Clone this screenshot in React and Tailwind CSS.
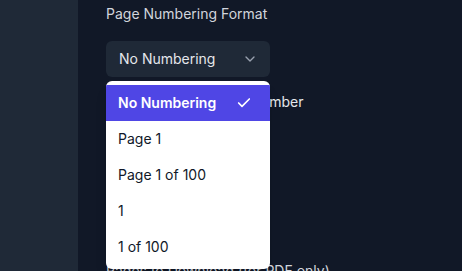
import { Check, ChevronDown } from 'lucide-react'

const options = ['No Numbering', 'Page 1', 'Page 1 of 100', '1', '1 of 100']

export default function App() {
  const selected = 'No Numbering'

  return (
    <div className="flex h-[271px] w-[462px] overflow-hidden bg-[#111827] font-['Inter','Liberation_Sans',sans-serif]">
      {/* Sidebar */}
      <aside className="w-[78px] shrink-0 bg-[#1f2937]" />

      {/* Settings panel */}
      <main className="flex-1 pl-[28px] pt-[4px]">
        <label className="block text-sm leading-5 text-gray-300">Page Numbering Format</label>

        <div className="relative mt-[17px] w-[164px]">
          <button className="flex h-9 w-full items-center justify-between rounded-md bg-[#1f2937] pl-[13px] pr-[12px] text-sm text-gray-200">
            <span>{selected}</span>
            <ChevronDown className="h-4 w-4 text-gray-400" strokeWidth={2} />
          </button>

          {/* Open listbox */}
          <ul className="absolute left-0 top-[40px] z-10 w-full overflow-hidden rounded-md bg-white py-1 shadow-lg">
            {options.map((opt) => (
              <li
                key={opt}
                className={`flex h-9 items-center justify-between pl-[12px] pr-[18px] text-sm ${
                  opt === selected ? 'bg-[#4f46e5] font-semibold text-white' : 'text-gray-900'
                }`}
              >
                <span>{opt}</span>
                {opt === selected && <Check className="h-4 w-4" strokeWidth={2.5} />}
              </li>
            ))}
          </ul>
        </div>

        {/* Content behind the listbox */}
        <div className="mt-[15px] flex items-center gap-2 text-sm text-gray-200">
          <input type="checkbox" className="h-4 w-4" />
          <span className="pl-[6px]">Show Total Page Number</span>
        </div>

        <div className="mt-[149px] text-sm text-gray-300">Pages to Download (for PDF only)</div>
      </main>
    </div>
  )
}
